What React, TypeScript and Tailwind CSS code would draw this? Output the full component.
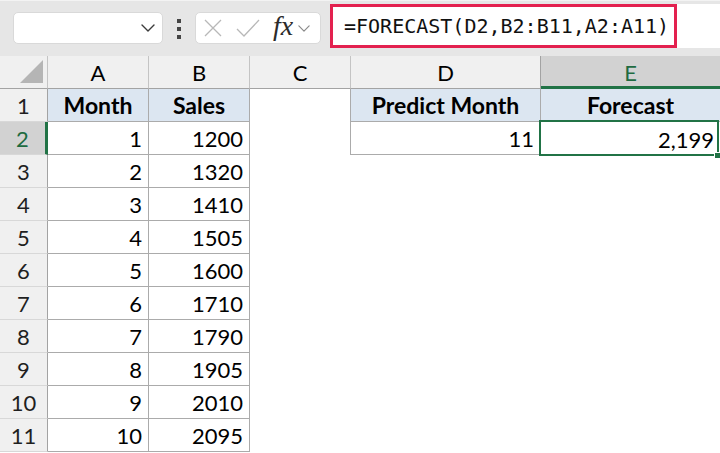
import React from 'react';

type CellProps = {
  children?: React.ReactNode;
  className?: string;
};

const Cell: React.FC<CellProps> = ({ children, className = '' }) => (
  <div className={`flex items-center h-[33px] pt-[1px] ${className}`}>{children}</div>
);

const months = [
  [1, 1200],
  [2, 1320],
  [3, 1410],
  [4, 1505],
  [5, 1600],
  [6, 1710],
  [7, 1790],
  [8, 1905],
  [9, 2010],
  [10, 2095],
];

const Chevron: React.FC<{ className?: string; color?: string }> = ({ className, color = '#3b3b3b' }) => (
  <svg viewBox="0 0 14 8" className={className} fill="none" stroke={color} strokeWidth="1.4" strokeLinecap="round" strokeLinejoin="round">
    <path d="M1 1l6 6 6-6" />
  </svg>
);

const App: React.FC = () => {
  const border = 'border-[#ababab]';
  const rowHead = 'justify-center bg-[#f0f0f0] border-r border-b border-r-[#a3a3a3] border-b-[#d8d8d8] text-[#1f1f1f]';
  const numCell = `justify-end pr-[6px] border-r border-b ${border}`;
  const headCell = `justify-center font-bold text-[23px] bg-[#dce6f1] border-b ${border}`;

  return (
    <div className="w-[720px] h-[453px] overflow-hidden bg-white font-['Lato',sans-serif] text-[22px] text-black">
      {/* Toolbar */}
      <div className="h-[56px] bg-[#e6e6e6] border-t border-[#f3f3f3] flex items-start">
        <div className="mt-[11px] ml-[13px] w-[150px] h-[32px] bg-white rounded-[5px] border border-[#d9d9d9] flex items-center justify-end pr-[7px]">
          <Chevron className="w-[14px] h-[8px]" />
        </div>
        <div className="mt-[18px] ml-[14px] w-[4px] flex flex-col gap-[4px]">
          <div className="w-[4px] h-[4px] bg-[#454545]" />
          <div className="w-[4px] h-[4px] bg-[#454545]" />
          <div className="w-[4px] h-[4px] bg-[#454545]" />
        </div>
        <div className="mt-[11px] ml-[14px] w-[126px] h-[32px] bg-white rounded-[5px] border border-[#d9d9d9] flex items-center">
          <svg viewBox="0 0 20 20" className="ml-[7px] w-[20px] h-[20px]" fill="none" stroke="#b8b8b8" strokeWidth="1.3">
            <path d="M2 2l16 16M18 2L2 18" />
          </svg>
          <svg viewBox="0 0 24 20" className="ml-[13px] w-[24px] h-[20px]" fill="none" stroke="#b8b8b8" strokeWidth="1.3">
            <path d="M1 11l7 7L23 2" />
          </svg>
          <span className="ml-[13px] font-['Liberation_Serif',serif] italic text-[28px] leading-none text-[#2b2b2b] -mt-[4px]">fx</span>
          <Chevron className="ml-[5px] w-[12px] h-[7px]" color="#8a8a8a" />
        </div>
        <div className="mt-[3px] ml-[9px] flex-1 h-[44px] bg-white flex">
          <div className="w-[347px] h-full border-[3px] border-[#e3214f] flex items-center pl-[11px] font-['DejaVu_Sans_Mono',monospace] text-[20px] text-[#111]">
            =FORECAST(D2,B2:B11,A2:A11)
          </div>
        </div>
      </div>

      {/* Sheet */}
      <div className="grid grid-cols-[48px_101px_101px_101px_190px_179px] auto-rows-[33px]">
        {/* Column headers */}
        <Cell className="bg-[#f0f0f0] border-r border-b border-r-[#c4c4c4] border-b-[#a3a3a3] justify-end items-end pb-[5px] pr-[3px]">
          <svg viewBox="0 0 24 24" className="w-[25px] h-[23px]">
            <path d="M24 0L24 24L0 24Z" fill="#b5b5b5" />
          </svg>
        </Cell>
        <Cell className="justify-center bg-[#f0f0f0] border-r border-b border-r-[#c4c4c4] border-b-[#a3a3a3]">A</Cell>
        <Cell className="justify-center bg-[#f0f0f0] border-r border-b border-r-[#c4c4c4] border-b-[#a3a3a3]">B</Cell>
        <Cell className="justify-center bg-[#f0f0f0] border-r border-b border-r-[#c4c4c4] border-b-[#a3a3a3]">C</Cell>
        <Cell className="justify-center bg-[#f0f0f0] border-r border-b border-r-[#a3a3a3] border-b-[#a3a3a3]">D</Cell>
        <Cell className="justify-center bg-[#d2d2d2] border-b-[3px] border-b-[#217346] text-[#1e6b41] pt-[2px]">E</Cell>

        {/* Row 1 */}
        <Cell className={rowHead}>1</Cell>
        <Cell className={`${headCell} border-r`}>Month</Cell>
        <Cell className={`${headCell} border-r`}>Sales</Cell>
        <Cell className={`border-r ${border}`} />
        <Cell className={`${headCell} border-r`}>Predict Month</Cell>
        <Cell className={headCell}>Forecast</Cell>

        {months.map(([m, s], i) => {
          const row = i + 2;
          const selected = row === 2;
          return (
            <React.Fragment key={row}>
              <Cell
                className={
                  selected
                    ? 'justify-center bg-[#d2d2d2] border-r-[3px] border-r-[#217346] border-b border-b-[#d8d8d8] text-[#1e6b41]'
                    : rowHead
                }
              >
                {row}
              </Cell>
              <Cell className={numCell}>{m}</Cell>
              <Cell className={numCell}>{s}</Cell>
              {selected ? (
                <>
                  <Cell className={`border-r ${border}`} />
                  <Cell className={numCell}>11</Cell>
                  <Cell className="relative justify-end pr-[6px]">
                    2,199
                    <div className="absolute -left-[2px] -top-[2px] right-[1px] -bottom-[1px] border-2 border-[#217346]" />
                    <div className="absolute -right-[1px] -bottom-[4px] w-[7px] h-[7px] bg-[#217346] border border-white" />
                  </Cell>
                </>
              ) : (
                <>
                  <Cell />
                  <Cell />
                  <Cell />
                </>
              )}
            </React.Fragment>
          );
        })}
      </div>
    </div>
  );
};

export default App;
